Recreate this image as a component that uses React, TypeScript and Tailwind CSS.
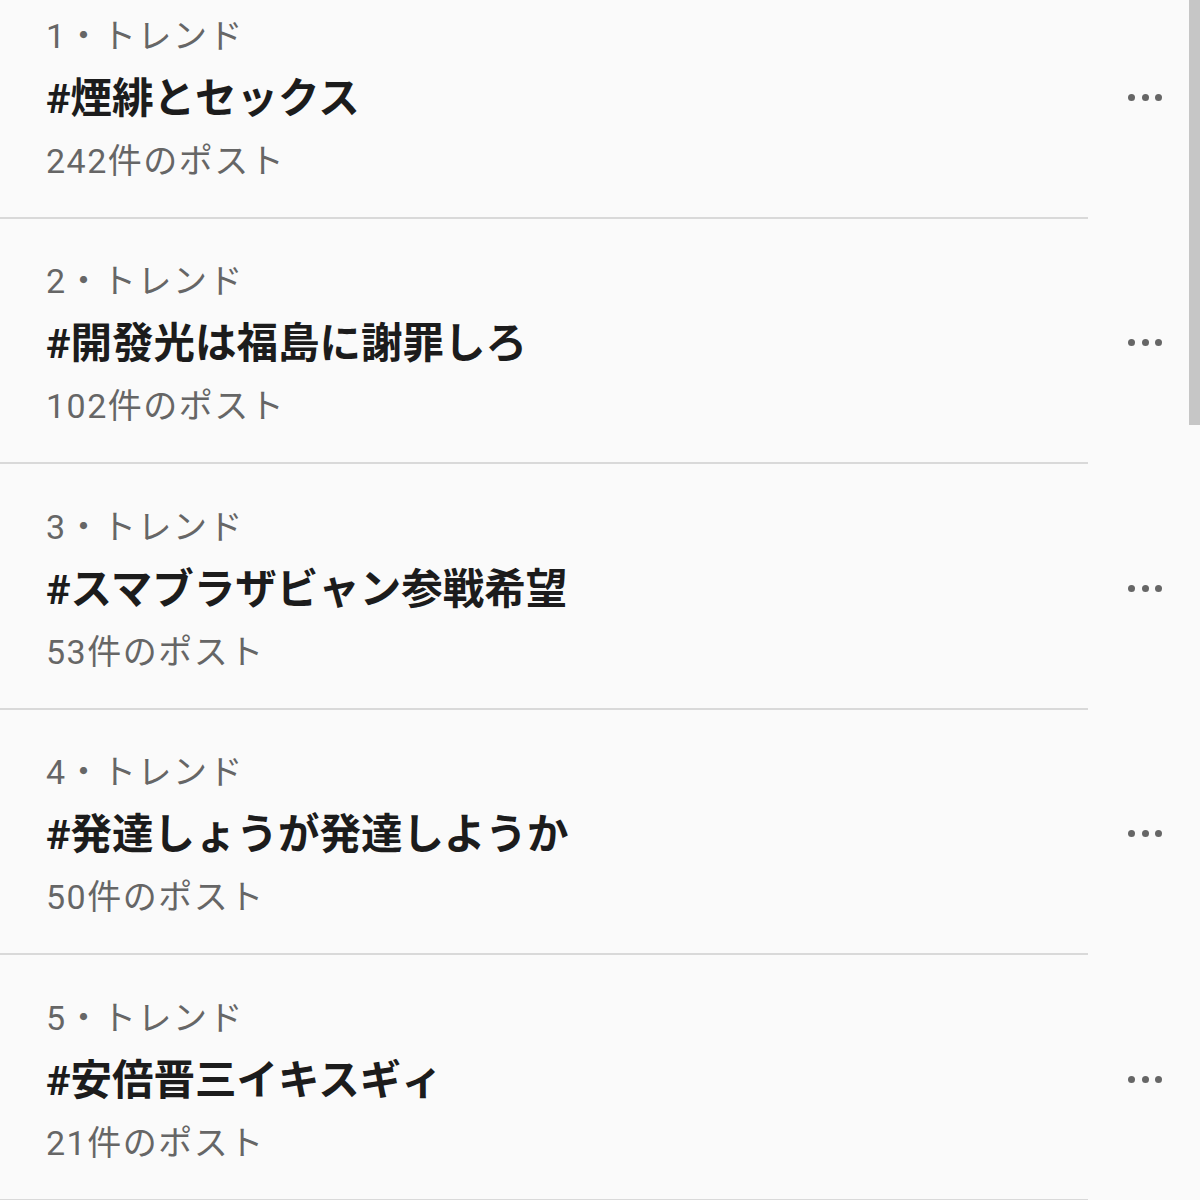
const trends = [
  { rank: 1, tag: '#煙緋とセックス', count: '242件のポスト' },
  { rank: 2, tag: '#開發光は福島に謝罪しろ', count: '102件のポスト' },
  { rank: 3, tag: '#スマブラザビャン参戦希望', count: '53件のポスト' },
  { rank: 4, tag: '#発達しょうが発達しようか', count: '50件のポスト' },
  { rank: 5, tag: '#安倍晋三イキスギィ', count: '21件のポスト' },
]

const font = { fontFamily: 'Roboto, "Noto Sans CJK JP", "Noto Sans", sans-serif' }

function Dots() {
  return (
    <div className="flex items-center gap-[6.5px] -mt-[2px]">
      <span className="w-[7px] h-[7px] rounded-full bg-[#666666]" />
      <span className="w-[7px] h-[7px] rounded-full bg-[#666666]" />
      <span className="w-[7px] h-[7px] rounded-full bg-[#666666]" />
    </div>
  )
}

function TrendRow({ rank, tag, count, first }: { rank: number; tag: string; count: string; first: boolean }) {
  return (
    <div>
      <div className={`flex items-center pl-[46px] pr-[38px] ${first ? 'pt-[5px]' : 'pt-[32px]'} pb-[25.5px]`}>
        <div className="flex-1 flex flex-col">
          <div className="h-[62px] flex items-center text-[34px] tracking-[1.5px] text-[#666666]">
            {rank}・トレンド
          </div>
          <div className="h-[64px] flex items-center text-[41.5px] font-bold text-[#1c1c1c]">{tag}</div>
          <div className="h-[60px] flex items-center text-[34px] tracking-[1.5px] text-[#666666]">{count}</div>
        </div>
        <Dots />
      </div>
      <div className="h-[2px] bg-[#d9d9d9] mr-[112px]" />
    </div>
  )
}

export default function App() {
  return (
    <div className="relative w-[1200px] h-[1200px] overflow-hidden bg-[#fafafa]" style={font}>
      {trends.map((t, i) => (
        <TrendRow key={t.rank} {...t} first={i === 0} />
      ))}
      <div className="absolute top-0 right-0 w-[11px] h-[425px] bg-[#c6c6c6]" />
    </div>
  )
}
